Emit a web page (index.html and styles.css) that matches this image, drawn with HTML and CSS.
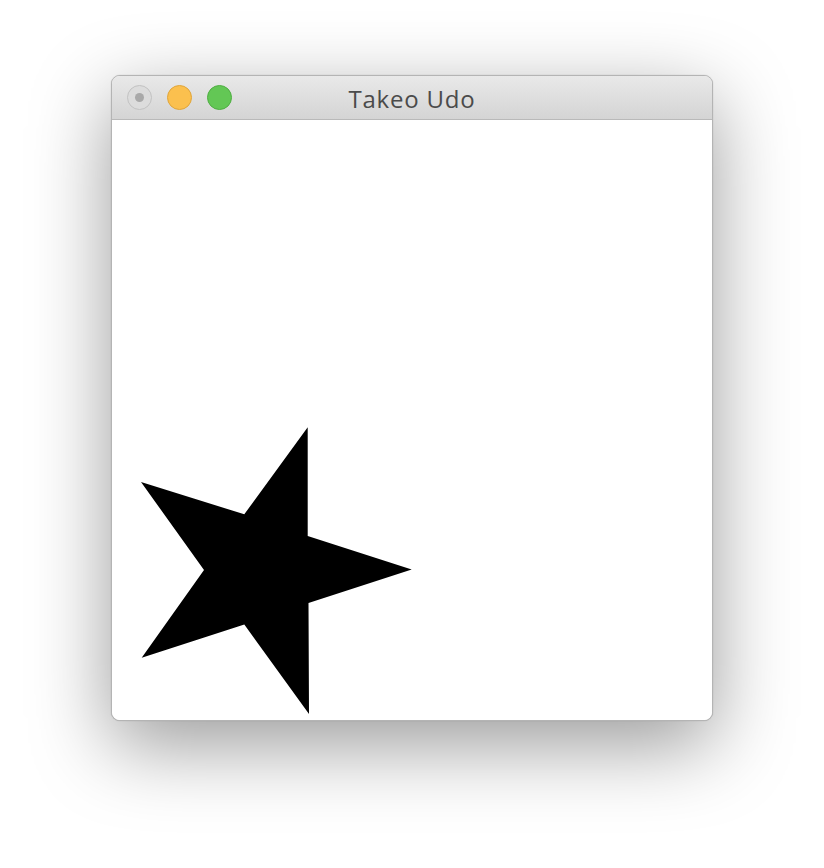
FILE: index.html
```html
<!DOCTYPE html>
<html>
<head>
<meta charset="utf-8">
<link rel="stylesheet" href="styles.css">
</head>
<body>
<div class="desktop">
  <div class="window">
    <div class="titlebar">
      <div class="lights">
        <span class="light close"><span class="dot"></span></span>
        <span class="light min"></span>
        <span class="light max"></span>
      </div>
      <div class="title">Takeo Udo</div>
    </div>
    <div class="content">
      <svg class="canvas" width="600" height="600" viewBox="0 0 600 600">
        <polygon points="195.7,307.3 195.7,416 299.7,449.5 196.5,483 197,594 132.3,504.5 29.7,537.7 92,450 29,362 132.3,394.3" fill="#000"/>
      </svg>
    </div>
  </div>
</div>
</body>
</html>
```
FILE: styles.css
```css
html, body {
  margin: 0;
  padding: 0;
  background: #fff;
}
.desktop {
  width: 824px;
  height: 868px;
  display: flex;
  justify-content: center;
  align-items: flex-start;
  padding-top: 75px;
  box-sizing: border-box;
}
.window {
  width: 600px;
  border: 1px solid #b4b4b4;
  border-radius: 9px;
  overflow: hidden;
  background: #fff;
  box-shadow: 0 24px 80px rgba(0,0,0,0.4), 0 0 1px rgba(0,0,0,0.3);
}
.titlebar {
  height: 43px;
  border-bottom: 1px solid #b9b9b9;
  background: linear-gradient(#e9e9e9, #d4d4d4);
  position: relative;
  display: flex;
  align-items: center;
  justify-content: center;
}
.lights {
  position: absolute;
  left: 15px;
  top: 9px;
  display: flex;
  gap: 15px;
}
.light {
  width: 25px;
  height: 25px;
  border-radius: 50%;
  box-sizing: border-box;
  display: flex;
  align-items: center;
  justify-content: center;
}
.close {
  background: #dcdcdc;
  border: 1px solid #c2c2c2;
}
.close .dot {
  width: 9px;
  height: 9px;
  border-radius: 50%;
  background: #a9a9a9;
}
.min {
  background: #fbc04e;
  border: 1px solid #e0a53a;
}
.max {
  background: #63c755;
  border: 1px solid #4fae42;
}
.title {
  font-family: "Open Sans", "Liberation Sans", sans-serif;
  font-size: 24px;
  letter-spacing: 0.8px;
  color: #4b4b4b;
  margin-top: 1px;
}
.content {
  width: 600px;
  height: 600px;
  background: #fff;
}
.canvas {
  display: block;
}
```
